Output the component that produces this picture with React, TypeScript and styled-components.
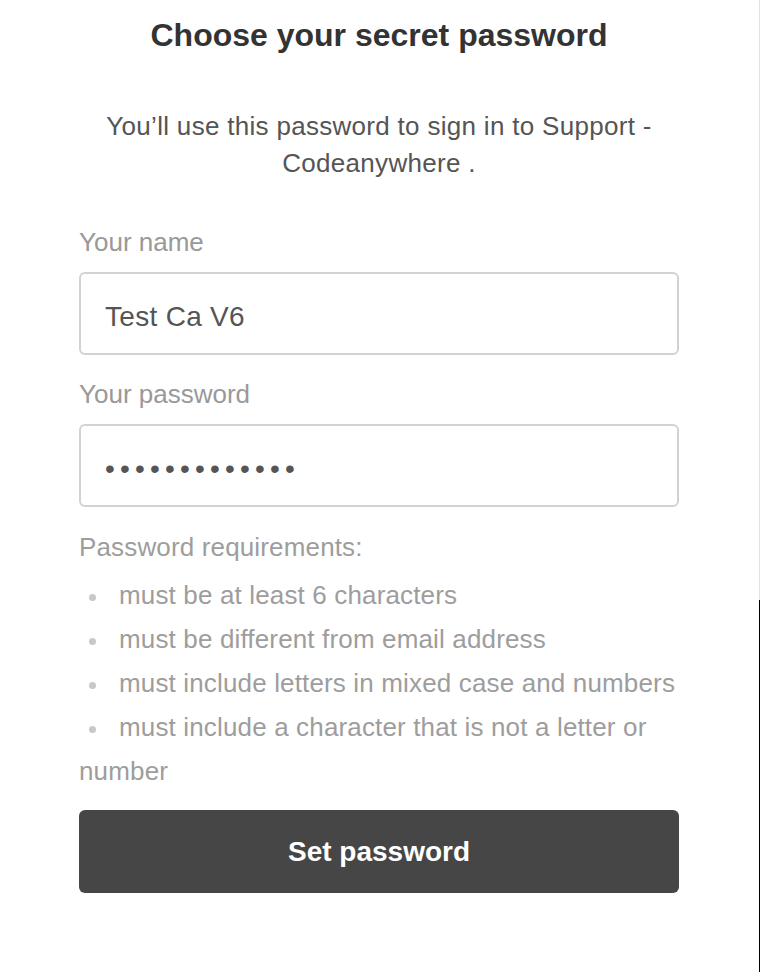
import React from "react";
import styled, { createGlobalStyle } from "styled-components";

const GlobalStyle = createGlobalStyle`
  html, body {
    margin: 0;
    padding: 0;
    background: #ffffff;
  }
  body {
    font-family: "Liberation Sans", Arial, Helvetica, sans-serif;
    -webkit-font-smoothing: antialiased;
  }
  * { box-sizing: border-box; }
`;

const Page = styled.div`
  display: grid;
  grid-template-columns: 1fr 1px;
  min-height: 100vh;
  width: 760px;
`;

const Main = styled.main`
  padding: 15px 0 0 79px;
`;

const Edge = styled.div`
  display: flex;
  flex-direction: column;
`;

const EdgeSegment = styled.div<{ $dark?: boolean; $height?: number }>`
  background: ${(p) => (p.$dark ? "#000000" : "#e2e2e2")};
  ${(p) => (p.$height ? `height: ${p.$height}px;` : "flex: 1;")}
`;

const Form = styled.form`
  width: 600px;
  display: flex;
  flex-direction: column;
`;

const Title = styled.h1`
  margin: 0;
  font-size: 32px;
  line-height: 40px;
  font-weight: 700;
  color: #333333;
  text-align: center;
`;

const Lead = styled.p`
  margin: 53px 0 0;
  font-size: 26px;
  letter-spacing: 0.3px;
  line-height: 37px;
  color: #555555;
  text-align: center;
`;

const Label = styled.label<{ $first?: boolean }>`
  display: block;
  margin-top: ${(p) => (p.$first ? "42px" : "21px")};
  font-size: 26px;
  line-height: 37px;
  color: #999999;
`;

const Field = styled.input`
  display: block;
  width: 600px;
  height: 83px;
  margin-top: 11px;
  padding: 6px 24px 0;
  border: 2px solid #d2d2d2;
  border-radius: 6px;
  background: #ffffff;
  font-family: "Liberation Sans", Arial, Helvetica, sans-serif;
  font-size: 28px;
  letter-spacing: 0.3px;
  color: #555555;
  outline: none;
  &[type="password"] {
    letter-spacing: 5.2px;
  }
`;

const Requirements = styled.div`
  margin-top: 18px;
  font-size: 26px;
  letter-spacing: 0.15px;
  line-height: 44px;
  color: #9d9d9d;
`;

const RequirementsTitle = styled.div``;

const RequirementList = styled.ul`
  margin: 4px 0 0;
  padding: 0;
  list-style: none;
`;

const Requirement = styled.li`
  &::before {
    content: "";
    display: inline-block;
    width: 7px;
    height: 7px;
    border-radius: 50%;
    background: #c8c8c8;
    vertical-align: middle;
    margin: 0 23px 0 10px;
  }
`;

const SubmitButton = styled.button`
  margin-top: 17px;
  width: 600px;
  height: 83px;
  border: none;
  border-radius: 6px;
  background: #464646;
  color: #ffffff;
  font-family: "Liberation Sans", Arial, Helvetica, sans-serif;
  font-size: 28px;
  font-weight: 700;
  cursor: pointer;
`;

const requirements = [
  "must be at least 6 characters",
  "must be different from email address",
  "must include letters in mixed case and numbers",
  "must include a character that is not a letter or number",
];

export default function App() {
  return (
    <>
      <GlobalStyle />
      <Page>
        <Main>
          <Form onSubmit={(e) => e.preventDefault()}>
            <Title>Choose your secret password</Title>
            <Lead>You’ll use this password to sign in to Support - Codeanywhere .</Lead>
            <Label $first htmlFor="name">Your name</Label>
            <Field id="name" type="text" defaultValue="Test Ca V6" />
            <Label htmlFor="password">Your password</Label>
            <Field id="password" type="password" defaultValue="abcdefghijklm" />
            <Requirements>
              <RequirementsTitle>Password requirements:</RequirementsTitle>
              <RequirementList>
                {requirements.map((r) => (
                  <Requirement key={r}>{r}</Requirement>
                ))}
              </RequirementList>
            </Requirements>
            <SubmitButton type="submit">Set password</SubmitButton>
          </Form>
        </Main>
        <Edge>
          <EdgeSegment $height={600} />
          <EdgeSegment $dark />
        </Edge>
      </Page>
    </>
  );
}
